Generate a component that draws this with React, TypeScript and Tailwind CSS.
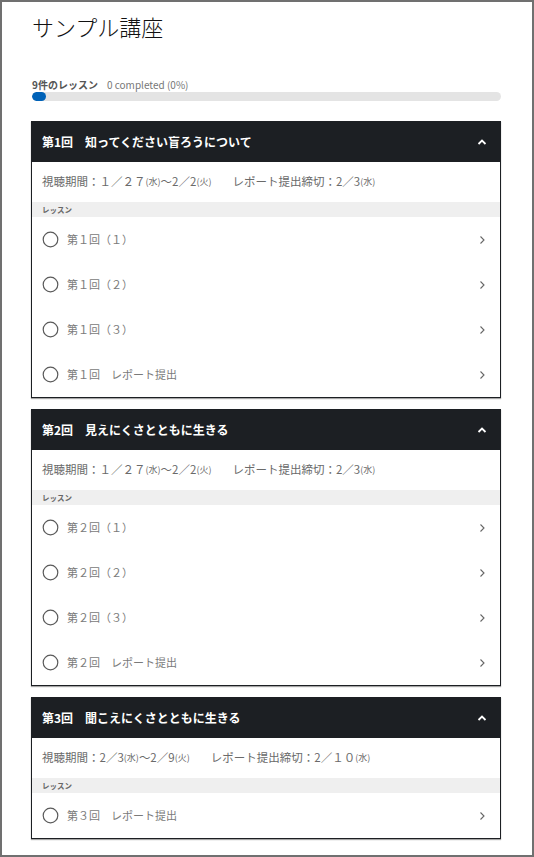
import React from "react";

const FONT = { fontFamily: '"Noto Sans CJK JP", "Noto Sans", sans-serif' };

function Circle() {
  return (
    <svg width="17" height="17" viewBox="0 0 17 17" className="shrink-0">
      <circle cx="8.5" cy="8.5" r="7.3" fill="none" stroke="#5a5a5a" strokeWidth="1.2" />
    </svg>
  );
}

function ChevronRight() {
  return (
    <svg width="8" height="10" viewBox="0 0 8 10" className="shrink-0">
      <path d="M2.5 1.5 L6 5 L2.5 8.5" fill="none" stroke="#666" strokeWidth="1.1" />
    </svg>
  );
}

function ChevronUp() {
  return (
    <svg width="10" height="8" viewBox="0 0 10 8" className="shrink-0">
      <path d="M1.5 6 L5 2.5 L8.5 6" fill="none" stroke="#fff" strokeWidth="1.8" />
    </svg>
  );
}

function Day({ d }: { d: string }) {
  return <span className="text-[9px]">({d})</span>;
}

type Section = {
  title: string;
  dates: React.ReactNode;
  rows: string[];
};

const gap = <span className="inline-block w-[21px]" />;

const sections: Section[] = [
  {
    title: "第1回　知ってください盲ろうについて",
    dates: (
      <>
        視聴期間：１／２７<Day d="水" />～2／2<Day d="火" />
        {gap}
        レポート提出締切：2／3<Day d="水" />
      </>
    ),
    rows: ["第１回（１）", "第１回（２）", "第１回（３）", "第１回　レポート提出"],
  },
  {
    title: "第2回　見えにくさとともに生きる",
    dates: (
      <>
        視聴期間：１／２７<Day d="水" />～2／2<Day d="火" />
        {gap}
        レポート提出締切：2／3<Day d="水" />
      </>
    ),
    rows: ["第２回（１）", "第２回（２）", "第２回（３）", "第２回　レポート提出"],
  },
  {
    title: "第3回　聞こえにくさとともに生きる",
    dates: (
      <>
        視聴期間：2／3<Day d="水" />～2／9<Day d="火" />
        {gap}
        レポート提出締切：2／１０<Day d="水" />
      </>
    ),
    rows: ["第３回　レポート提出"],
  },
];

function Card({ s }: { s: Section }) {
  return (
    <div className="border border-[#1c1f23] shadow-[0_1px_1px_rgba(0,0,0,0.35)] bg-white">
      <div className="h-[40px] bg-[#1c1f23] flex items-center justify-between pl-[10px] pr-[13px]">
        <span className="text-white text-[12px] font-bold">{s.title}</span>
        <ChevronUp />
      </div>
      <div className="h-[40px] flex items-center pl-[10px] text-[11.5px] text-[#6a6a6a]">
        {s.dates}
      </div>
      <div className="h-[15px] bg-[#efefef] flex items-center pl-[10px] text-[7.5px] font-bold text-[#666]">
        レッスン
      </div>
      {s.rows.map((r) => (
        <div key={r} className="h-[45px] flex items-center pl-[10px] pr-[14px]">
          <Circle />
          <span className="ml-[8px] text-[11px] text-[#7a7a7a] flex-1">{r}</span>
          <ChevronRight />
        </div>
      ))}
    </div>
  );
}

export default function App() {
  return (
    <div
      className="w-[534px] h-[857px] border-2 border-[#707070] bg-white pl-[29px] pr-[31px] pt-[8px] overflow-hidden"
      style={FONT}
    >
      <h1 className="text-[22px] leading-[32px] font-light text-[#111] pl-[1px]">サンプル講座</h1>
      <div className="mt-[35px] h-[14px] flex items-center gap-[9px] pl-[1px]">
        <span className="text-[10px] font-bold text-[#555]">9件のレッスン</span>
        <span className="text-[10px] text-[#777]">0 completed (0%)</span>
      </div>
      <div className="mt-[1px] h-[9px] rounded-full bg-[#e4e4e4] w-[469px] ml-[1px] overflow-hidden">
        <div className="h-full w-[14px] rounded-full bg-[#0062b8]" />
      </div>
      <div className="mt-[20px] flex flex-col gap-[11px]">
        {sections.map((s) => (
          <Card key={s.title} s={s} />
        ))}
      </div>
    </div>
  );
}
